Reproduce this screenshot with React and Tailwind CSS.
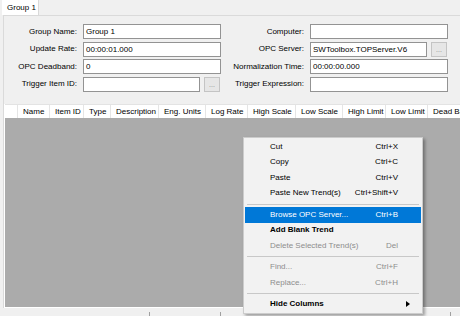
import React from 'react';

const columns = [
  { label: '', w: 'w-[13px]' },
  { label: 'Name', w: 'w-[32px]' },
  { label: 'Item ID', w: 'w-[34px]' },
  { label: 'Type', w: 'w-[27px]' },
  { label: 'Description', w: 'w-[48px]' },
  { label: 'Eng. Units', w: 'w-[47px]' },
  { label: 'Log Rate', w: 'w-[42px]' },
  { label: 'High Scale', w: 'w-[48px]' },
  { label: 'Low Scale', w: 'w-[47px]' },
  { label: 'High Limit', w: 'w-[43px]' },
  { label: 'Low Limit', w: 'w-[42px]' },
  { label: 'Dead Band', w: 'w-[40px]' },
];

const menu = [
  { label: 'Cut', key: 'Ctrl+X' },
  { label: 'Copy', key: 'Ctrl+C' },
  { label: 'Paste', key: 'Ctrl+V' },
  { label: 'Paste New Trend(s)', key: 'Ctrl+Shift+V' },
  { sep: true },
  { label: 'Browse OPC Server...', key: 'Ctrl+B', active: true },
  { label: 'Add Blank Trend', bold: true },
  { label: 'Delete Selected Trend(s)', key: 'Del', disabled: true },
  { sep: true },
  { label: 'Find...', key: 'Ctrl+F', disabled: true },
  { label: 'Replace...', key: 'Ctrl+H', disabled: true },
  { sep: true },
  { label: 'Hide Columns', bold: true, sub: true },
];

function TextBox({ value, w }) {
  return (
    <div className={`${w} h-[15px] bg-white border border-[#939393] pl-[2px] leading-[13px] whitespace-nowrap overflow-hidden`}>
      {value}
    </div>
  );
}

function DotsButton() {
  return (
    <div className="w-[16px] h-[15px] bg-[#e6e6e6] border border-[#c4c4c4] text-[#8a8a8a] text-[7px] leading-[14px] text-center">
      ...
    </div>
  );
}

function Row({ label, labelW, children }) {
  return (
    <div className="flex items-center h-[15px]">
      <div className={`${labelW} text-right pr-[6px] whitespace-nowrap`}>{label}</div>
      {children}
    </div>
  );
}

export default function App() {
  return (
    <div className="w-[460px] h-[316px] bg-[#f0f0f0] overflow-hidden relative text-[8px] text-black font-['Liberation_Sans',Arial,sans-serif]">
      {/* tab strip */}
      <div className="h-[15px] flex pl-[2px]">
        <div className="w-[37px] h-[15px] bg-white border-r border-[#d9d9d9] pl-[5px] leading-[15px]">Group 1</div>
      </div>

      {/* tab page */}
      <div className="ml-[3px] h-[293px] border-l border-t border-[#dadada] flex flex-col">
        {/* form */}
        <div className="h-[88px] pt-[8px] flex">
          <div className="flex flex-col gap-[2.67px]">
            <Row label="Group Name:" labelW="w-[79px]"><TextBox value="Group 1" w="w-[138px]" /></Row>
            <Row label="Update Rate:" labelW="w-[79px]"><TextBox value="00:00:01.000" w="w-[138px]" /></Row>
            <Row label="OPC Deadband:" labelW="w-[79px]"><TextBox value="0" w="w-[138px]" /></Row>
            <Row label="Trigger Item ID:" labelW="w-[79px]">
              <TextBox value="" w="w-[117px]" />
              <div className="ml-[4px]"><DotsButton /></div>
            </Row>
          </div>
          <div className="flex flex-col gap-[2.67px]">
            <Row label="Computer:" labelW="w-[89px]"><TextBox value="" w="w-[138px]" /></Row>
            <Row label="OPC Server:" labelW="w-[89px]">
              <TextBox value="SWToolbox.TOPServer.V6" w="w-[117px]" />
              <div className="ml-[4px]"><DotsButton /></div>
            </Row>
            <Row label="Normalization Time:" labelW="w-[89px]"><TextBox value="00:00:00.000" w="w-[138px]" /></Row>
            <Row label="Trigger Expression:" labelW="w-[89px]"><TextBox value="" w="w-[138px]" /></Row>
          </div>
        </div>

        {/* grid */}
        <div className="flex-1 flex flex-col border-l border-white">
          <div className="h-[14px] bg-white border-t border-[#e3e3e3] flex shrink-0">
            {columns.map((c, i) => (
              <div
                key={i}
                className={`${c.w} shrink-0 h-full border-r border-[#e5e5e5] pl-[5px] leading-[13px] whitespace-nowrap overflow-hidden`}
              >
                {c.label}
              </div>
            ))}
          </div>
          <div className="flex-1 bg-[#ababab]"></div>
          <div className="h-px bg-white"></div>
        </div>
      </div>

      {/* status strip */}
      <div className="h-[8px] relative">
        <div className="absolute left-[149px] top-[4px] w-px h-[4px] bg-[#a0a0a0]"></div>
        <div className="absolute left-[220px] top-[4px] w-px h-[4px] bg-[#a0a0a0]"></div>
        <div className="absolute left-[450px] top-[4px] w-px h-[4px] bg-[#a0a0a0]"></div>
      </div>

      {/* context menu */}
      <div className="absolute left-[243px] top-[137px] w-[180px] bg-[#f2f2f2] border border-[#cccccc] py-px shadow-[2px_2px_3px_rgba(0,0,0,0.35)]">
        {menu.map((m, i) =>
          m.sep ? (
            <div key={i} className="h-[6px] flex items-center px-[3px]">
              <div className="w-full h-px bg-[#c8c8c8]"></div>
            </div>
          ) : (
            <div key={i} className="h-[15.5px] px-px">
              <div
                className={`h-full flex items-center pl-[25px] pr-[23px] ${
                  m.active ? 'bg-[#0078d7] text-white' : m.disabled ? 'text-[#8d8d8d]' : 'text-black'
                }`}
              >
                <span className={`flex-1 whitespace-nowrap ${m.bold ? 'font-bold' : ''}`}>{m.label}</span>
                {m.key && <span className="whitespace-nowrap">{m.key}</span>}
                {m.sub && (
                  <svg width="4" height="6" viewBox="0 0 4 6" className="mr-[-12px]">
                    <path d="M0 0 L4 3 L0 6 Z" fill="#000" />
                  </svg>
                )}
              </div>
            </div>
          )
        )}
      </div>
    </div>
  );
}
